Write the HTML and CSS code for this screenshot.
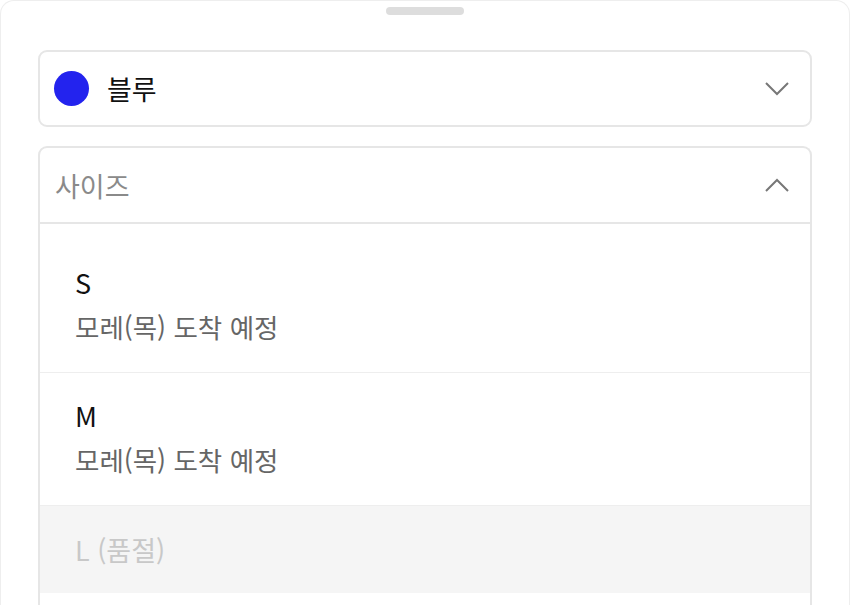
FILE: index.html
```html
<!DOCTYPE html>
<html lang="ko">
<head>
  <meta charset="UTF-8">
  <meta name="viewport" content="width=device-width, initial-scale=1.0">
  <title>옵션 선택</title>
  <link rel="stylesheet" href="styles.css">
</head>
<body>

  <div class="sheet">
    <div class="handle"></div>

    <div class="select">
      <span class="swatch"></span>
      <span class="select-value">블루</span>
      <svg class="chevron" width="24" height="14" viewBox="0 0 24 14">
        <polyline points="1,1 12,12 23,1" fill="none" stroke="#777" stroke-width="2"/>
      </svg>
    </div>

    <div class="select-open">
      <div class="select-head">
        <span class="placeholder">사이즈</span>
        <svg class="chevron" width="24" height="14" viewBox="0 0 24 14">
          <polyline points="1,13 12,2 23,13" fill="none" stroke="#777" stroke-width="2"/>
        </svg>
      </div>
      <ul class="options">
        <li class="option">
          <div class="option-name">S</div>
          <div class="option-note">모레(목) 도착 예정</div>
        </li>
        <li class="option">
          <div class="option-name">M</div>
          <div class="option-note">모레(목) 도착 예정</div>
        </li>
        <li class="option soldout">
          <div class="option-name">L (품절)</div>
        </li>
      </ul>
    </div>
  </div>

</body>
</html>
```

FILE: styles.css
```css
html, body {
  margin: 0;
  height: 100%;
  overflow: hidden;
}
body {
  font-family: "Noto Sans CJK KR", "Noto Sans", sans-serif;
  background-color: #fff;
  color: #111;
}
.sheet {
  display: flex;
  flex-direction: column;
  box-sizing: border-box;
  min-height: 100%;
  padding: 6px 37px 0;
  border: 1px solid #eee;
  border-bottom: none;
  border-radius: 14px 14px 0 0;
}
.handle {
  width: 78px;
  height: 8px;
  margin: 0 auto 35px;
  border-radius: 4px;
  background-color: #ddd;
}
.select, .select-head {
  display: flex;
  align-items: center;
  box-sizing: border-box;
}
.select {
  height: 77px;
  padding: 0 21px 0 14px;
  border: 2px solid #e6e6e6;
  border-radius: 9px;
  margin-bottom: 19px;
}
.swatch {
  width: 35px;
  height: 35px;
  border-radius: 50%;
  background-color: #2323ee;
  margin-right: 18px;
}
.select-value {
  flex: 1;
  font-size: 27px;
}
.select-open {
  flex: 1;
  border: 2px solid #e6e6e6;
  border-bottom: none;
  border-radius: 9px 9px 0 0;
}
.select-head {
  height: 76px;
  padding: 0 21px 0 15px;
  border-bottom: 2px solid #e6e6e6;
}
.placeholder {
  flex: 1;
  font-size: 27px;
  color: #8a8a8a;
}
.options {
  list-style: none;
  margin: 0;
  padding: 16px 0 0;
}
.option {
  padding: 25px 35px 27px;
  border-bottom: 1px solid #eee;
}
.option-name {
  font-size: 27px;
  line-height: 36px;
  color: #111;
}
.option-note {
  margin-top: 8px;
  font-size: 26.5px;
  line-height: 36px;
  color: #666;
}
.soldout {
  padding: 26px 35px 25px;
  background-color: #f5f5f5;
  border-bottom: none;
}
.soldout .option-name {
  color: #c8c8c8;
}
```
